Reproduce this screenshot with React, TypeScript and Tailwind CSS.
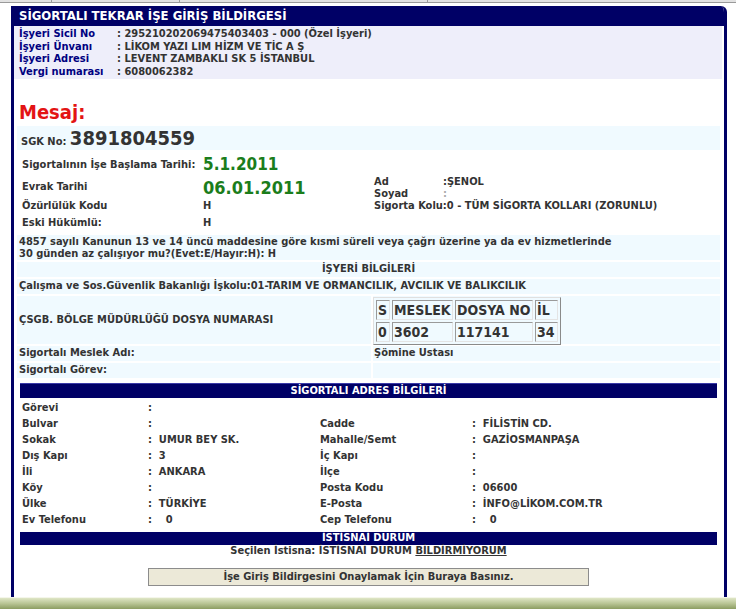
import React from 'react';

const FONT = "font-['DejaVu_Sans_Condensed','DejaVu_Sans',sans-serif]";

const infoRows = [
  ['İşyeri Sicil No', '295210202069475403403 - 000 (Özel İşyeri)'],
  ['İşyeri Ünvanı', 'LİKOM YAZI LIM HİZM VE TİC A Ş'],
  ['İşyeri Adresi', 'LEVENT ZAMBAKLI SK 5 İSTANBUL'],
  ['Vergi numarası', '6080062382'],
];

const addressRows: [string, string, string, string][] = [
  ['Görevi', ':', '', ''],
  ['Bulvar', ':', 'Cadde', ': FİLİSTİN CD.'],
  ['Sokak', ': UMUR BEY SK.', 'Mahalle/Semt', ': GAZİOSMANPAŞA'],
  ['Dış Kapı', ': 3', 'İç Kapı', ':'],
  ['İli', ': ANKARA', 'İlçe', ':'],
  ['Köy', ':', 'Posta Kodu', ': 06600'],
  ['Ülke', ': TÜRKİYE', 'E-Posta', ': İNFO@LİKOM.COM.TR'],
  ['Ev Telefonu', ':   0', 'Cep Telefonu', ':   0'],
];

function TopStrip() {
  return (
    <div className="flex h-[3px] shrink-0 border-b border-[#9a9a9a] bg-[#e2e2e2]">
      <div className="w-[52px] border-r border-[#9a9a9a]" />
      <div className="w-[128px] border-r border-[#9a9a9a]" />
      <div className="w-[248px] border-r border-[#9a9a9a]" />
      <div className="flex-1" />
    </div>
  );
}

function InfoBlock() {
  return (
    <div className="mr-[2px] h-[53px] bg-[#eeeefa] px-[5px] pt-[2px]">
      {infoRows.map(([label, value]) => (
        <div key={label} className="flex h-[12.7px] items-center whitespace-nowrap">
          <span className="w-[98px] text-[#000080]">{label}</span>
          <span className="text-[#333]">: {value}</span>
        </div>
      ))}
    </div>
  );
}

function DosyaTable() {
  const head = ['S', 'MESLEK', 'DOSYA NO', 'İL'];
  const body = ['0', '3602', '117141', '34'];
  const widths = ['w-[14px]', 'w-[61px]', 'w-[78px]', 'w-[23px]'];
  const cell =
    'h-[20px] whitespace-nowrap border border-t-[#9a9a9a] border-l-[#9a9a9a] border-b-[#e4e4e4] border-r-[#e4e4e4] px-[1px] py-0 text-left align-middle';
  return (
    <table className="table-fixed border-separate border-spacing-[2px] border border-t-[#e0e0e0] border-l-[#e0e0e0] border-b-[#8a8a8a] border-r-[#8a8a8a] text-[14px] leading-[16px] text-[#333]">
      <tbody>
        <tr>
          {head.map((h, i) => (
            <td key={h} className={`${cell} ${widths[i]}`}>
              {h}
            </td>
          ))}
        </tr>
        <tr>
          {body.map((b, i) => (
            <td key={i} className={`${cell} ${widths[i]}`}>
              {b}
            </td>
          ))}
        </tr>
      </tbody>
    </table>
  );
}

function PersonBlock() {
  return (
    <div className="ml-[3px] flex h-[85px] pt-[4px]">
      <div className="w-[357px] pl-[5px]">
        <div className="flex h-[22px] items-center">
          <span className="w-[181px] whitespace-nowrap">Sigortalının İşe Başlama Tarihi:</span>
          <span className="text-[17px] text-[#1b7d1b]">5.1.2011</span>
        </div>
        <div className="flex h-[22px] items-center">
          <span className="w-[181px]">Evrak Tarihi</span>
          <span className="text-[18px] text-[#1b7d1b]">06.01.2011</span>
        </div>
        <div className="flex h-[17px] items-center">
          <span className="w-[181px]">Özürlülük Kodu</span>
          <span>H</span>
        </div>
        <div className="flex h-[16px] items-center">
          <span className="w-[181px]">Eski Hükümlü:</span>
          <span>H</span>
        </div>
      </div>
      <div className="flex flex-1 flex-col justify-center pb-[2px] leading-[12px]">
        <div className="flex">
          <span className="w-[69px]">Ad</span>
          <span>:ŞENOL</span>
        </div>
        <div className="flex">
          <span className="w-[69px]">Soyad</span>
          <span className="text-[#aaa]">:</span>
        </div>
        <div className="whitespace-nowrap">Sigorta Kolu:0 - TÜM SİGORTA KOLLARI (ZORUNLU)</div>
      </div>
    </div>
  );
}

function WorkplaceTable() {
  return (
    <div className="ml-[3px] mr-[4px] flex flex-col gap-[2px]">
      <div className="h-[25px] bg-[#f0faff] pl-[2px] pt-[1px] leading-[12px]">
        4857 sayılı Kanunun 13 ve 14 üncü maddesine göre kısmi süreli veya çağrı üzerine ya da ev hizmetlerinde
        <br />
        30 günden az çalışıyor mu?(Evet:E/Hayır:H): H
      </div>
      <div className="flex h-[15px] items-center justify-center bg-[#f0faff]">İŞYERİ BİLGİLERİ</div>
      <div className="flex h-[15px] items-center bg-[#f0faff] pl-[2px]">
        Çalışma ve Sos.Güvenlik Bakanlığı İşkolu:01-TARIM VE ORMANCILIK, AVCILIK VE BALIKCILIK
      </div>
      <div className="flex h-[48px] gap-[2px]">
        <div className="flex w-[354px] items-center bg-[#f0faff] pl-[2px]">ÇSGB. BÖLGE MÜDÜRLÜĞÜ DOSYA NUMARASI</div>
        <div className="flex flex-1 items-start bg-[#f0faff] pt-[1px]">
          <DosyaTable />
        </div>
      </div>
      <div className="flex h-[15px] gap-[2px]">
        <div className="flex w-[354px] items-center bg-[#f0faff] pl-[2px]">Sigortalı Meslek Adı:</div>
        <div className="flex flex-1 items-center bg-[#f0faff] pl-[1px]">Şömine Ustası</div>
      </div>
      <div className="flex h-[15px] gap-[2px]">
        <div className="flex w-[354px] items-center bg-[#f0faff] pl-[2px]">Sigortalı Görev:</div>
        <div className="flex-1 bg-[#f0faff]" />
      </div>
    </div>
  );
}

function AddressTable() {
  return (
    <div className="ml-[6px] mr-[7px] mt-[5px]">
      <div className="flex h-[15px] items-center justify-center border-t border-[#3a3aa8] bg-[#000066] text-white">
        SİGORTALI ADRES BİLGİLERİ
      </div>
      <div className="pt-[2px]">
        {addressRows.map(([l1, v1, l2, v2]) => (
          <div key={l1} className="grid h-[16px] grid-cols-[126px_172px_152px_1fr] items-center pl-[2px]">
            <span>{l1}</span>
            <span className="whitespace-pre">{v1.replace(': ', ':  ')}</span>
            <span>{l2}</span>
            <span className="whitespace-pre">{v2.replace(': ', ':  ')}</span>
          </div>
        ))}
      </div>
      <div className="mt-[4px] flex h-[13px] items-center justify-center bg-[#000066] text-white">İSTİSNAİ DURUM</div>
      <div className="flex h-[12px] items-center justify-center">
        Seçilen İstisna: İSTİSNAİ DURUM&nbsp;<span className="underline">BİLDİRMİYORUM</span>
      </div>
      <div className="mt-[11px] flex justify-center">
        <button className="h-[18px] w-[441px] border border-[#8c8c8c] bg-[#ece9d8] text-[#333]">
          İşe Giriş Bildirgesini Onaylamak İçin Buraya Basınız.
        </button>
      </div>
    </div>
  );
}

export default function App() {
  return (
    <div className={`${FONT} flex h-[609px] w-[736px] flex-col overflow-hidden bg-white text-[11px] font-bold text-[#333]`}>
      <TopStrip />
      <div className="h-[3px] shrink-0" />
      <div className="ml-[11px] flex w-[716px] flex-1 flex-col overflow-hidden rounded-tr-[6px] border-x-[3px] border-[#000066]">
        <div className="flex h-[20px] shrink-0 items-center bg-[#000066] pl-[5px] text-[13px] text-white">
          SİGORTALI TEKRAR İŞE GİRİŞ BİLDİRGESİ
        </div>
        <InfoBlock />
        <div className="h-[47px] pl-[5px] pt-[21px] text-[20px] leading-[24px] text-[#e31414]">Mesaj:</div>
        <div className="ml-[3px] mr-[4px] h-[24px] bg-[#f0faff] pl-[4px] leading-[24px]">
          <span>SGK No: </span>
          <span className="text-[20px]">3891804559</span>
        </div>
        <PersonBlock />
        <WorkplaceTable />
        <AddressTable />
      </div>
      <div className="h-[12px] shrink-0 border-t border-[#f4f6ea] bg-gradient-to-b from-[#dfe6c6] via-[#b9c595] to-[#8c9d62]" />
    </div>
  );
}
